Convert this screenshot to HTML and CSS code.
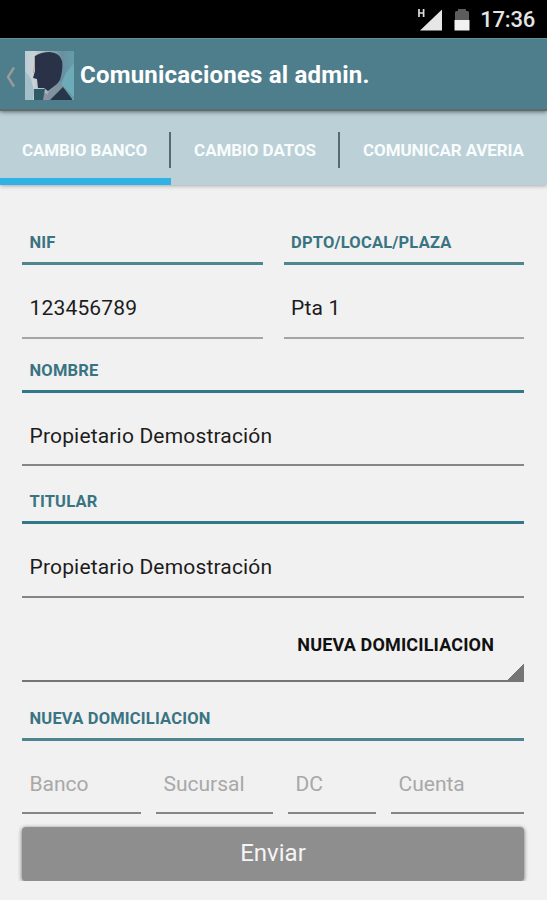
FILE: index.html
```html
<!DOCTYPE html>
<html lang="es">
<head>
    <meta charset="UTF-8">
    <meta name="viewport" content="width=device-width, initial-scale=1.0">
    <title>Comunicaciones al admin.</title>
    <link rel="stylesheet" href="styles.css">
</head>
<body>
    <div class="status-bar">
        <svg class="signal" width="26" height="24" viewBox="0 0 26 24">
            <path d="M3 1v8M7.600 1v8M3 5h4.600" fill="none" stroke="#ddd" stroke-width="1.700"/>
            <path d="M26 1.500v21H4z" fill="#e6e6e6"/>
        </svg>
        <svg class="battery" width="16" height="24" viewBox="0 0 16 24">
            <path d="M1 12V4.500Q1 3 2.500 3H4V1h8v2h1.500Q15 3 15 4.500V12z" fill="#5c5c5c"/>
            <path d="M0.500 12h15v10.500h-15z" fill="#f2f2f2"/>
        </svg>
        <span class="clock">17:36</span>
    </div>

    <header class="action-bar">
        <svg class="back" width="10" height="22" viewBox="0 0 10 22">
            <path d="M8 1.500L2 11l6 9.500" fill="none" stroke="#9b9a9b" stroke-width="2.400"/>
        </svg>
        <svg class="avatar" width="49" height="49" viewBox="0 0 49 49">
            <defs>
                <linearGradient id="fondo" x1="0" y1="0" x2="1" y2="0">
                    <stop offset="0" stop-color="#bccbd3"/>
                    <stop offset="0.180" stop-color="#cad3d8"/>
                    <stop offset="0.450" stop-color="#9fb3bd"/>
                    <stop offset="0.750" stop-color="#688f9f"/>
                    <stop offset="1" stop-color="#659dab"/>
                </linearGradient>
            </defs>
            <rect width="49" height="49" fill="url(#fondo)"/>
            <path d="M0 20l6 8 3 12-1 9H0z" fill="#a3bfca"/>
            <path d="M41 22l8-10v34L36 33z" fill="#6cabb7"/>
            <!-- solapa y camisa -->
            <path d="M20 49l4-9 10-8 4 4-12 13z" fill="#81929f"/>
            <path d="M16 40l6 3 1 6h-7z" fill="#8d91a0"/>
            <path d="M9 38h11l-2 11H9z" fill="#2e5b65"/>
            <path d="M25 49l13-13 9 12v1z" fill="#27364a"/>
            <!-- cabeza -->
            <path d="M10 5Q16 1 25 1q10 1 12 9c1 5 0 13-2 19l-3 4-9 7-4-3h-6l-1-9-4-1 2-7z" fill="#293247"/>
            <path d="M9.500 5v9l-1 8" fill="none" stroke="#bca7a0" stroke-width="1"/>
        </svg>
        <h1 class="title">Comunicaciones al admin.</h1>
    </header>

    <nav class="tabs">
        <a class="tab tab-banco active">CAMBIO BANCO</a>
        <a class="tab tab-datos">CAMBIO DATOS</a>
        <a class="tab tab-averia">COMUNICAR AVERIA</a>
    </nav>

    <main class="form">
        <div class="row">
            <div class="field">
                <div class="label">NIF</div>
                <div class="value light">123456789</div>
            </div>
            <div class="field">
                <div class="label">DPTO/LOCAL/PLAZA</div>
                <div class="value light">Pta 1</div>
            </div>
        </div>

        <div class="field nombre">
            <div class="label">NOMBRE</div>
            <div class="value">Propietario Demostración</div>
        </div>

        <div class="field titular">
            <div class="label">TITULAR</div>
            <div class="value">Propietario Demostración</div>
        </div>

        <div class="spinner">NUEVA DOMICILIACION</div>

        <div class="label cuenta-label">NUEVA DOMICILIACION</div>
        <div class="cuenta">
            <div class="value hint">Banco</div>
            <div class="value hint">Sucursal</div>
            <div class="value hint">DC</div>
            <div class="value hint">Cuenta</div>
        </div>

        <button class="enviar" type="button">Enviar</button>
    </main>
</body>
</html>
```

FILE: styles.css
```css
* {
    box-sizing: border-box;
}

body {
    margin: 0;
    background-color: #f1f1f1;
    font-family: Roboto, "Liberation Sans", sans-serif;
    color: #1c1c1c;
}

/* barra de estado */
.status-bar {
    display: flex;
    justify-content: flex-end;
    align-items: center;
    height: 38px;
    padding: 2px 12px 0 0;
    background-color: #000;
}

.signal {
    margin-right: 12px;
}

.battery {
    margin-right: 10px;
}

.clock {
    font-size: 22px;
    font-weight: 500;
    line-height: 26px;
    letter-spacing: -0.2px;
    color: #e4e4e4;
}

/* cabecera */
.action-bar {
    position: relative;
    display: flex;
    align-items: center;
    height: 73px;
    padding-left: 6px;
    background-color: #4e7e8c;
    border-top: 1px solid #629099;
    border-bottom: 2px solid #606b6e;
    box-shadow: 0 1px 4px rgba(0, 0, 0, 0.5);
}

.back {
    margin-top: 5px;
}

.avatar {
    margin: 2px 6px 0 9px;
}

.title {
    margin: 1px 0 0;
    font-size: 24px;
    font-weight: 700;
    letter-spacing: 0.2px;
    color: #fff;
}

/* pestañas */
.tabs {
    display: flex;
    height: 74px;
    background-color: #bbd0d7;
    box-shadow: 0 1px 4px rgba(0, 0, 0, 0.3);
}

.tab {
    display: flex;
    align-items: center;
    justify-content: center;
    padding-top: 4px;
    font-size: 17px;
    font-weight: 700;
    letter-spacing: -0.1px;
    color: #f8fcfd;
    background: linear-gradient(#566a72, #566a72) right 21px / 2px 36px no-repeat;
}

.tab-banco {
    width: 171px;
    padding-right: 2px;
}

.tab-datos {
    width: 169px;
    padding-right: 1px;
}

.tab-averia {
    flex: 1;
    background: none;
}

.active {
    padding-top: 11px;
    border-bottom: 7px solid #31b2e5;
}

/* formulario */
.form {
    padding: 37px 23px 0 22px;
}

.row {
    display: flex;
    gap: 21px;
}

.row .field {
    flex: 1;
}

.label {
    height: 43px;
    padding-left: 7.5px;
    border-bottom: 3px solid #4e858f;
    font-size: 16.5px;
    font-weight: 700;
    line-height: 42px;
    letter-spacing: 0.18px;
    color: #397482;
}

.value {
    height: 73px;
    padding-left: 7.5px;
    border-bottom: 2px solid #858585;
    font-size: 21px;
    line-height: 86px;
    letter-spacing: 0.17px;
}

.light {
    height: 74px;
    border-color: #a5a5a5;
}

.nombre {
    margin-top: 11px;
}

.nombre .label,
.titular .label {
    border-color: #33788a;
}

.titular {
    margin-top: 15px;
}

.titular .value {
    height: 74px;
}

.spinner {
    height: 84px;
    padding-right: 30px;
    border-bottom: 2px solid #757575;
    background: linear-gradient(135deg, transparent 50%, #757575 50%) right bottom / 16px 16px no-repeat;
    font-size: 18px;
    font-weight: 700;
    line-height: 93px;
    letter-spacing: 0.15px;
    text-align: right;
    color: #111;
}

.cuenta-label {
    margin-top: 16px;
}

.cuenta {
    display: grid;
    grid-template-columns: 119px 117px 88px 1fr;
    gap: 15px;
}

.hint {
    letter-spacing: 0;
    color: #a8a8a8;
}

.enviar {
    display: block;
    width: 100%;
    height: 54px;
    margin-top: 13px;
    padding: 0 0 2px;
    border: 0;
    border-radius: 4px;
    background-color: #8e8e8e;
    box-shadow: 0 1px 4px rgba(0, 0, 0, 0.6);
    font-family: inherit;
    font-size: 24px;
    color: #f5f5f5;
}
```
